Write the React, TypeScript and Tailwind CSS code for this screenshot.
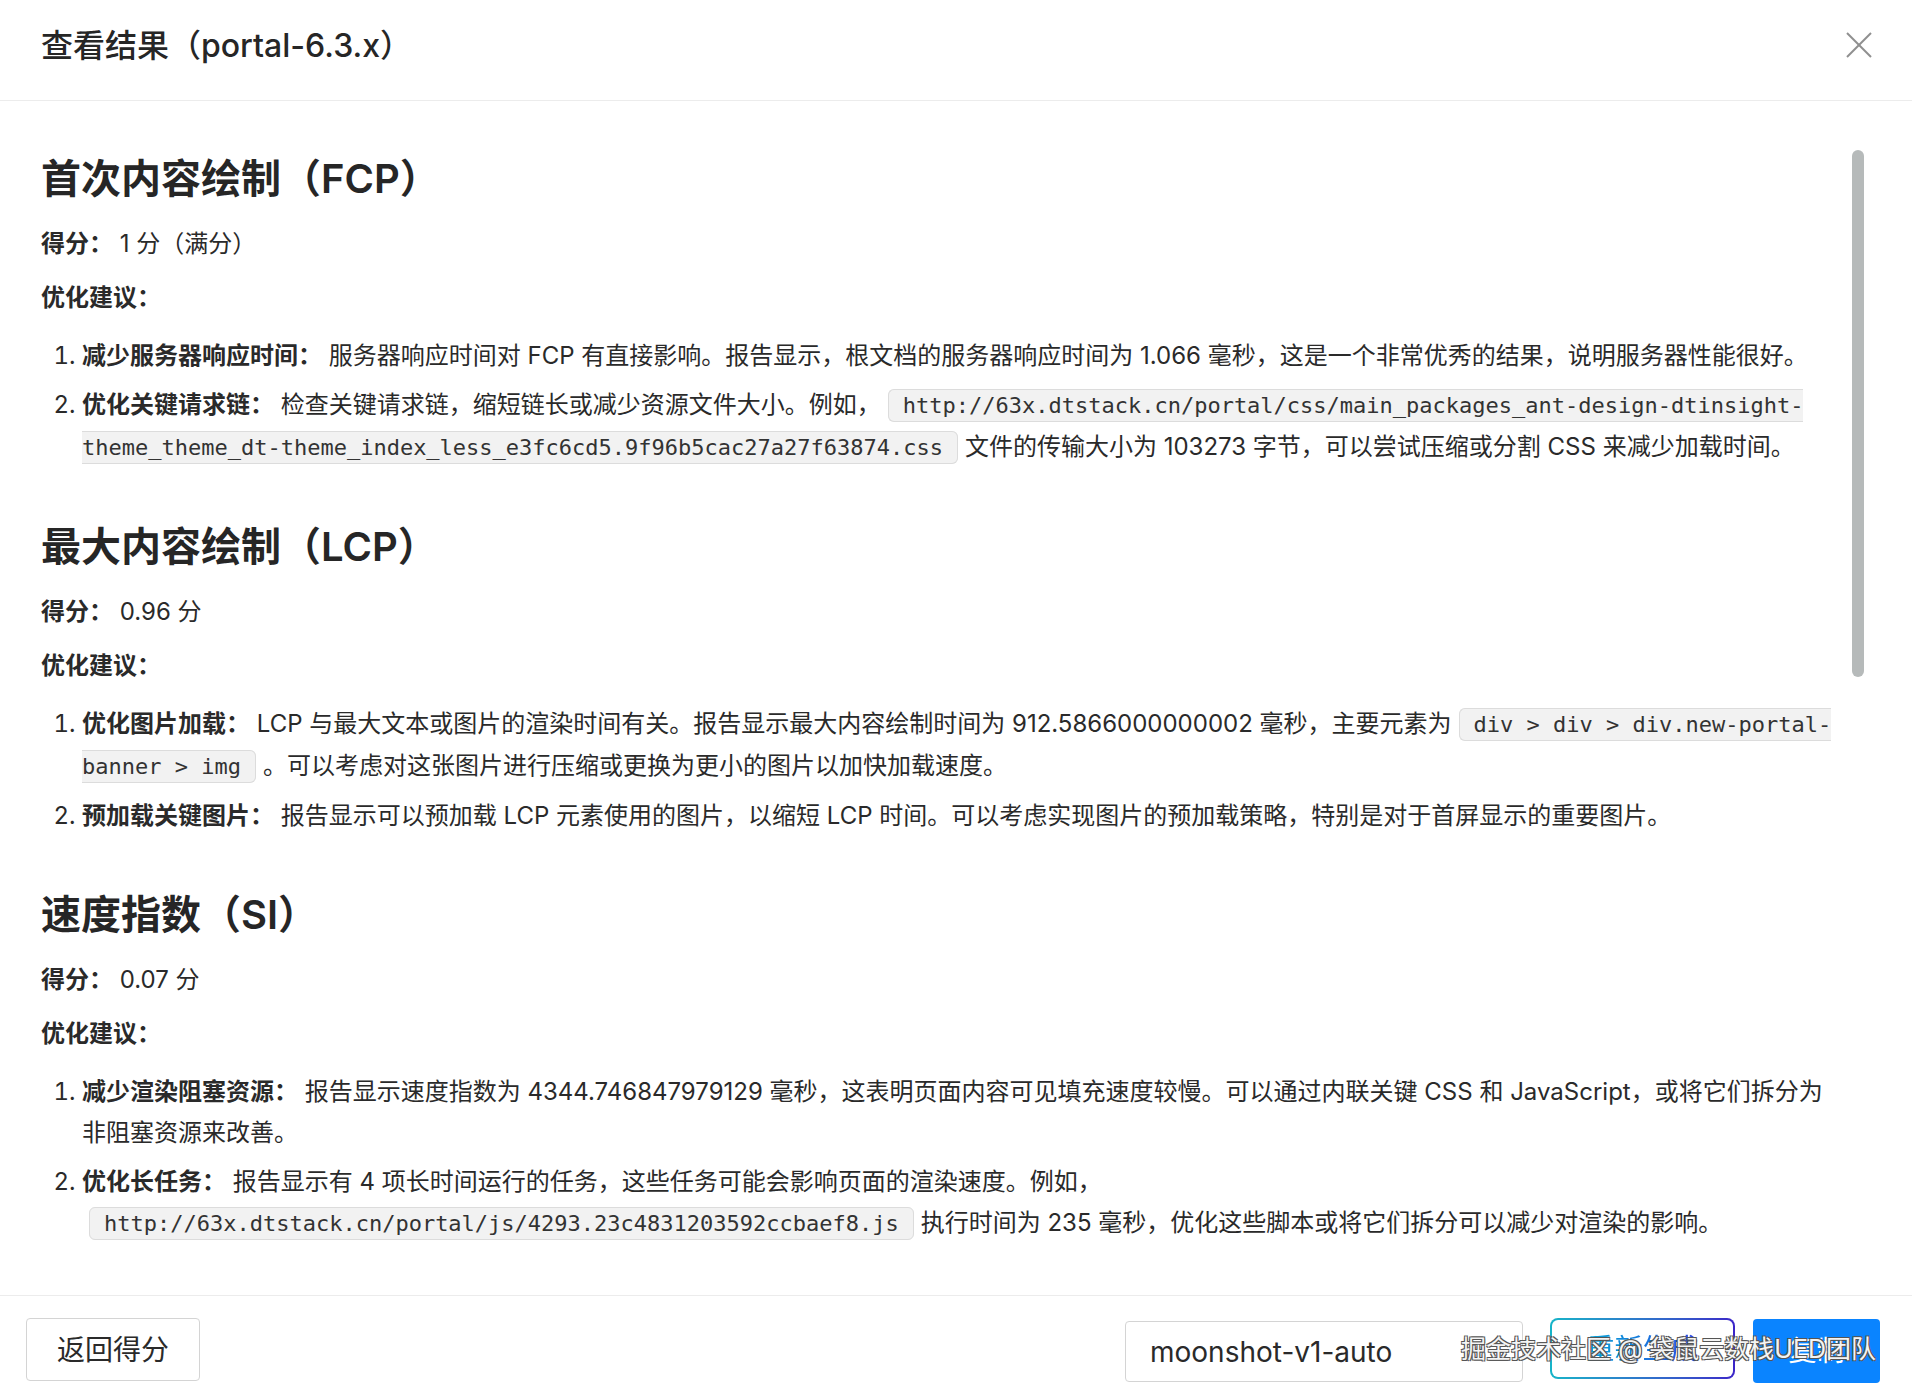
import React from "react";

const FONT = 'Inter, "Noto Sans CJK SC", sans-serif';

function Code({ children }: { children: React.ReactNode }) {
  return (
    <code className="mx-[7px] rounded-[6px] border border-[#dcdcdc] bg-[#f2f2f2] px-[14px] py-[3px] font-['DejaVu_Sans_Mono',monospace] text-[22px] text-[#333]">
      {children}
    </code>
  );
}

function Item({ label, children }: { label: string; children: React.ReactNode }) {
  return (
    <li className="mt-[8px] first:mt-0 pl-0">
      <span className="font-semibold">{label}</span> {children}
    </li>
  );
}

function Section({
  title,
  score,
  first,
  children,
}: {
  title: string;
  score: string;
  first?: boolean;
  children: React.ReactNode;
}) {
  return (
    <section className={first ? "" : "mt-[51px]"}>
      <h2 className="text-[40px] leading-[56px] font-semibold text-[#262626]">{title}</h2>
      <p className="mt-[16px]">
        <span className="font-semibold">得分：</span> {score}
      </p>
      <p className="mt-[13px] font-semibold">优化建议：</p>
      <ol className="mt-[17px] list-decimal pl-[41px]">{children}</ol>
    </section>
  );
}

export default function App() {
  return (
    <div
      className="relative flex h-[1398px] w-[1912px] flex-col overflow-hidden bg-white text-[#2a2a2a]"
      style={{ fontFamily: FONT }}
    >
      {/* Header */}
      <div className="flex h-[101px] shrink-0 items-center justify-between border-b border-[#ececec] pb-[8px] pl-[41px] pr-[40px]">
        <div className="text-[32px] font-medium text-[#262626]">查看结果（portal-6.3.x）</div>
        <svg width="26" height="26" viewBox="0 0 26 26" className="mt-[-2px]">
          <line x1="1" y1="1" x2="25" y2="25" stroke="#8f8f8f" strokeWidth="2" />
          <line x1="25" y1="1" x2="1" y2="25" stroke="#8f8f8f" strokeWidth="2" />
        </svg>
      </div>

      {/* Content */}
      <div className="relative flex-1 overflow-hidden pl-[41px] pr-[72px] pt-[50px] text-[24px] leading-[41px]">
        <Section title="首次内容绘制（FCP）" score="1 分（满分）" first>
          <Item label="减少服务器响应时间：">
            服务器响应时间对 FCP 有直接影响。报告显示，根文档的服务器响应时间为 1.066 毫秒，这是一个非常优秀的结果，说明服务器性能很好。
          </Item>
          <Item label="优化关键请求链：">
            检查关键请求链，缩短链长或减少资源文件大小。例如，
            <Code>
              http://63x.dtstack.cn/portal/css/main_packages_ant-design-dtinsight-theme_theme_dt-theme_index_less_e3fc6cd5.9f96b5cac27a27f63874.css
            </Code>
            文件的传输大小为 103273 字节，可以尝试压缩或分割 CSS 来减少加载时间。
          </Item>
        </Section>

        <Section title="最大内容绘制（LCP）" score="0.96 分">
          <Item label="优化图片加载：">
            LCP 与最大文本或图片的渲染时间有关。报告显示最大内容绘制时间为 912.5866000000002 毫秒，主要元素为
            <Code>div &gt; div &gt; div.new-portal-banner &gt; img</Code>
            。可以考虑对这张图片进行压缩或更换为更小的图片以加快加载速度。
          </Item>
          <Item label="预加载关键图片：">
            报告显示可以预加载 LCP 元素使用的图片，以缩短 LCP 时间。可以考虑实现图片的预加载策略，特别是对于首屏显示的重要图片。
          </Item>
        </Section>

        <Section title="速度指数（SI）" score="0.07 分">
          <Item label="减少渲染阻塞资源：">
            报告显示速度指数为 4344.746847979129 毫秒，这表明页面内容可见填充速度较慢。可以通过内联关键 CSS 和 JavaScript，或将它们拆分为非阻塞资源来改善。
          </Item>
          <Item label="优化长任务：">
            报告显示有 4 项长时间运行的任务，这些任务可能会影响页面的渲染速度。例如，
            <Code>http://63x.dtstack.cn/portal/js/4293.23c4831203592ccbaef8.js</Code>
            执行时间为 235 毫秒，优化这些脚本或将它们拆分可以减少对渲染的影响。
          </Item>
        </Section>
      </div>

      {/* Scrollbar thumb overlay */}
      <div className="absolute left-[1852px] top-[150px] h-[527px] w-[12px] rounded-full bg-[#b6baba]" />

      {/* Footer */}
      <div className="flex h-[103px] shrink-0 items-start justify-between border-t border-[#ececec] pl-[26px] pr-[32px] pt-[22px]">
        <button className="flex h-[63px] w-[174px] items-center justify-center rounded-[4px] border border-[#d4d4d4] bg-white text-[28px] text-[#2a2a2a]">
          返回得分
        </button>
        <div className="flex items-start">
          <div className="mt-[3px] flex h-[61px] w-[398px] items-center rounded-[4px] border border-[#d4d4d4] bg-white pl-[24px] text-[28px] text-[#2a2a2a]">
            moonshot-v1-auto
          </div>
          <div className="ml-[27px] h-[61px] w-[185px] rounded-[8px] bg-gradient-to-r from-[#16b4c8] to-[#3b24c8] p-[2px]">
            <div className="flex h-full w-full items-center justify-center rounded-[6px] bg-white">
              <span className="bg-gradient-to-r from-[#0aa6d6] to-[#2b3fe0] bg-clip-text text-[28px] text-transparent">
                重新生成
              </span>
            </div>
          </div>
          <button className="ml-[18px] mt-[1px] flex h-[64px] w-[127px] items-center justify-center rounded-[4px] bg-[#0a84ff] text-[28px] text-white">
            复制
          </button>
        </div>
      </div>

      {/* Watermark */}
      <div className="pointer-events-none absolute bottom-[34px] right-[36px] text-[25px] leading-[30px] text-[#f4f4f4] [text-shadow:1px_1px_0_#555,-1px_-1px_0_#555,1px_-1px_0_#555,-1px_1px_0_#555]">
        掘金技术社区 @ 袋鼠云数栈UED团队
      </div>
    </div>
  );
}
